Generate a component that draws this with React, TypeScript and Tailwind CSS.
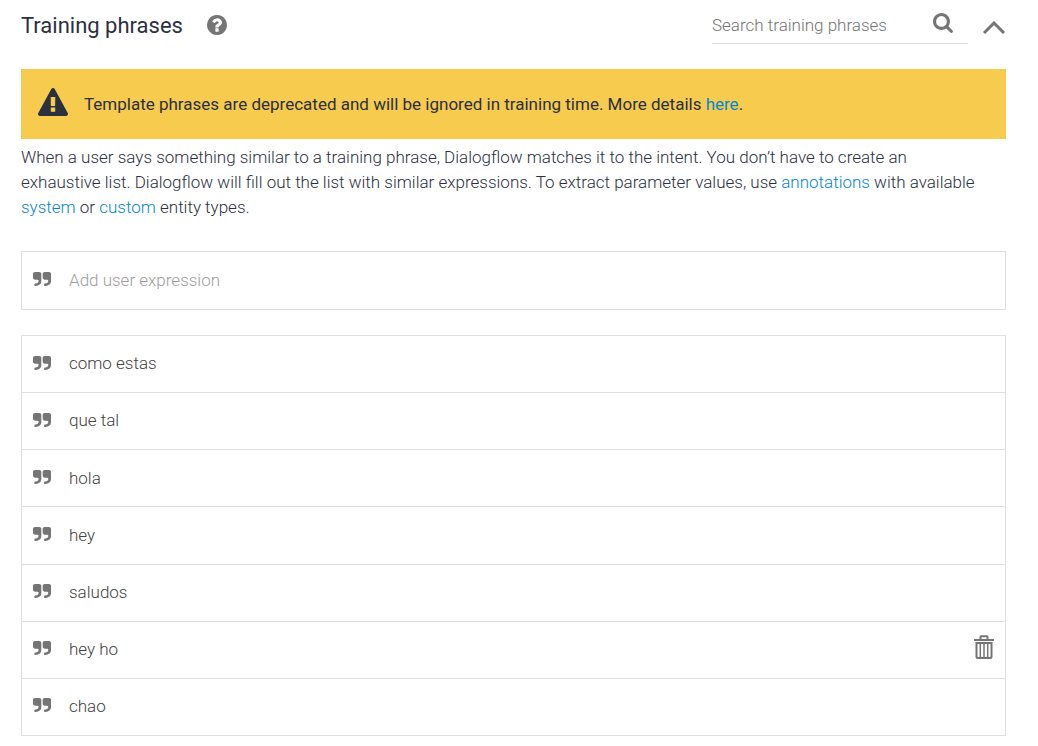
import React from "react";

const phrases = ["como estas", "que tal", "hola", "hey", "saludos", "hey ho", "chao"];

function QuoteIcon() {
  return (
    <span className="shrink-0 pb-[3px]">
      <svg viewBox="0 0 1664 1280" className="h-[14px] w-[18px] fill-[#757575]" preserveAspectRatio="none" aria-hidden="true">
        <path d="M768 192v704q0 104-40.500 198.500T618 1258t-163.500 109.500T256 1408h-64q-26 0-45-19t-19-45v-128q0-26 19-45t45-19h64q106 0 181-75t75-181v-32q0-40-28-68t-68-28H192q-80 0-136-56T0 576V192Q0 112 56 56T192 0h384q80 0 136 56t56 136zm896 0v704q0 104-40.500 198.500T1514 1258t-163.500 109.500T1152 1408h-64q-26 0-45-19t-19-45v-128q0-26 19-45t45-19h64q106 0 181-75t75-181v-32q0-40-28-68t-68-28h-224q-80 0-136-56t-56-136V192q0-80 56-136t136-56h384q80 0 136 56t56 136z" transform="scale(1 .909)" />
      </svg>
    </span>
  );
}

function WarningIcon() {
  return (
    <svg viewBox="0 0 30 28" className="h-7 w-[30px] shrink-0" aria-hidden="true">
      <path fill="#2b303f" d="M13.300 1a2 2 0 0 1 3.400 0L29.700 25a2 2 0 0 1-1.700 3H2a2 2 0 0 1-1.700-3z" />
      <path fill="#f7cb4d" d="M12.700 9h4.600l-.2 9h-4.200zM12.800 19.500h4.400v4.300h-4.400z" />
    </svg>
  );
}

function HelpIcon() {
  return (
    <svg viewBox="0 0 1536 1536" className="size-5 fill-[#757575]" aria-hidden="true">
      <path d="M896 1248v-192q0-14-9-23t-23-9H672q-14 0-23 9t-9 23v192q0 14 9 23t23 9h192q14 0 23-9t9-23zm256-672q0-88-55.500-163T958 297t-170-41q-243 0-371 213-15 24 8 42l132 100q7 6 19 6 16 0 25-12 53-68 86-92 34-24 86-24 48 0 85.500 26t37.500 59q0 38-20 61t-68 45q-63 28-115.500 86.500T640 892v36q0 14 9 23t23 9h192q14 0 23-9t9-23q0-19 21.500-49.500T972 829q32-18 49-28.500t46-35 44.500-48 28-60.500 12.500-81zm384 192q0 209-103 385.500T1153.500 1433 768 1536t-385.500-103T103 1153.500 0 768t103-385.500T382.500 103 768 0t385.500 103T1433 382.500 1536 768z" />
    </svg>
  );
}

function SearchIcon() {
  return (
    <svg viewBox="0 0 1664 1664" className="size-5 fill-[#757575]" aria-hidden="true">
      <path d="M1152 704q0-185-131.500-316.500T704 256 387.500 387.500 256 704t131.500 316.500T704 1152t316.500-131.500T1152 704zm512 832q0 52-38 90t-90 38q-54 0-90-38l-343-342q-179 124-399 124-143 0-273.500-55.500t-225-150-150-225T0 704t55.500-273.500 150-225 225-150T704 0t273.500 55.500 225 150 150 225T1408 704q0 220-124 399l343 343q37 37 37 90z" />
    </svg>
  );
}

function TrashIcon() {
  return (
    <svg viewBox="0 0 20 24" className="h-6 w-5" fill="none" stroke="#757575" aria-hidden="true">
      <path strokeWidth="2" d="M6.500 4V2a.8.8 0 0 1 .8-.8h5.400a.8.8 0 0 1 .8.8V4" />
      <path strokeWidth="2" d="M0 5h20" />
      <path strokeWidth="2" d="M2.500 8h15v13.500a1.500 1.500 0 0 1-1.500 1.500H4a1.500 1.500 0 0 1-1.500-1.500z" />
      <path strokeWidth="1.500" d="M6.300 8v15M10 8v15M13.700 8v15" />
    </svg>
  );
}

export default function App() {
  return (
    <main className="bg-white pr-8 pb-2 pl-[21px] font-[Roboto,sans-serif] text-[17px] font-light text-[#2b303f]">
      <header className="flex h-[69px] items-start justify-between">
        <div className="flex h-[50px] items-center gap-6">
          <h2 className="text-[22px] font-normal">Training phrases</h2>
          <button type="button" aria-label="Help"><HelpIcon /></button>
        </div>
        <div className="flex items-start gap-[15px] pr-px">
          <div className="flex h-11 w-64 items-center border-b border-[#e0e0e0] pr-[15px]">
            <input
              type="search"
              aria-label="Search training phrases"
              placeholder="Search training phrases"
              className="min-w-0 flex-1 pt-2 outline-none placeholder:text-[#757575]"
            />
            <button type="button" aria-label="Search" className="pt-[3px]"><SearchIcon /></button>
          </div>
          <button type="button" aria-label="Collapse" className="flex h-[54px] items-center">
            <svg viewBox="0 0 22 13" className="h-[13px] w-[22px]" fill="none" stroke="#757575" strokeWidth="3" aria-hidden="true">
              <path d="M1 12L11 2l10 10" />
            </svg>
          </button>
        </div>
      </header>

      <div role="alert" className="flex h-[70px] items-center gap-4 bg-[#f7cb4d] px-4 pl-[17px] font-normal">
        <div className="pb-1"><WarningIcon /></div>
        <p className="pt-0.5">
          Template phrases are deprecated and will be ignored in training time. More details{" "}
          <a href="#details" className="text-[#0288d1]">here</a>.
        </p>
      </div>

      <p className="mt-1.5 pr-6 leading-[25px]">
        When a user says something similar to a training phrase, Dialogflow matches it to the intent. You don’t have to
        create an exhaustive list. Dialogflow will fill out the list with similar expressions. To extract parameter
        values, use <a href="#annotations" className="text-[#0288d1]">annotations</a> with available{" "}
        <a href="#system" className="text-[#0288d1]">system</a> or{" "}
        <a href="#custom" className="text-[#0288d1]">custom</a> entity types.
      </p>

      <label className="mt-[31px] flex h-[59px] items-center gap-[18px] border border-[#e0e0e0] px-[11px]">
        <QuoteIcon />
        <input
          type="text"
          aria-label="Add user expression"
          placeholder="Add user expression"
          className="min-w-0 flex-1 outline-none placeholder:text-[#9e9e9e]"
        />
      </label>

      <ul className="mt-[25px] grid min-h-[401px] auto-rows-fr border-x border-t border-[#e0e0e0] text-[#424242]">
        {phrases.map((phrase) => (
          <li key={phrase} className="flex items-center gap-[18px] border-b border-[#e0e0e0] px-[11px]">
            <QuoteIcon />
            <span className="flex-1">{phrase}</span>
            {phrase === "hey ho" && (
              <button type="button" aria-label={`Delete ${phrase}`} className="pb-1.5"><TrashIcon /></button>
            )}
          </li>
        ))}
      </ul>
    </main>
  );
}
